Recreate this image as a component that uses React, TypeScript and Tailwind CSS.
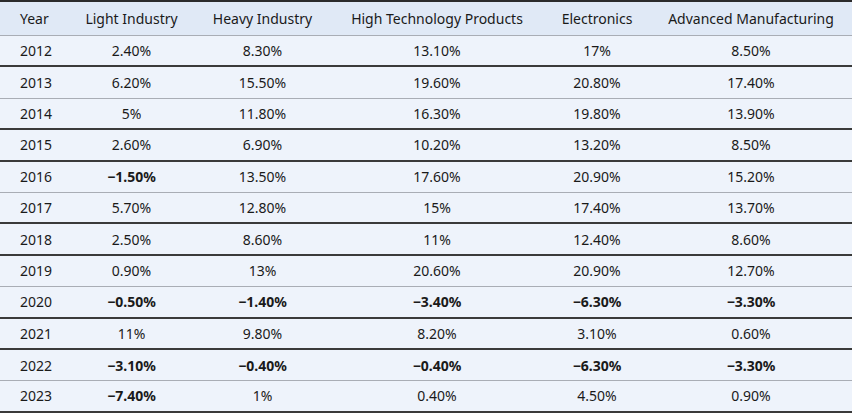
import React from "react";

type Row = { year: string; vals: string[]; dark: boolean };

const rows: Row[] = [
  { year: "2012", vals: ["2.40%", "8.30%", "13.10%", "17%", "8.50%"], dark: true },
  { year: "2013", vals: ["6.20%", "15.50%", "19.60%", "20.80%", "17.40%"], dark: false },
  { year: "2014", vals: ["5%", "11.80%", "16.30%", "19.80%", "13.90%"], dark: true },
  { year: "2015", vals: ["2.60%", "6.90%", "10.20%", "13.20%", "8.50%"], dark: true },
  { year: "2016", vals: ["\u22121.50%", "13.50%", "17.60%", "20.90%", "15.20%"], dark: false },
  { year: "2017", vals: ["5.70%", "12.80%", "15%", "17.40%", "13.70%"], dark: true },
  { year: "2018", vals: ["2.50%", "8.60%", "11%", "12.40%", "8.60%"], dark: true },
  { year: "2019", vals: ["0.90%", "13%", "20.60%", "20.90%", "12.70%"], dark: false },
  { year: "2020", vals: ["\u22120.50%", "\u22121.40%", "\u22123.40%", "\u22126.30%", "\u22123.30%"], dark: true },
  { year: "2021", vals: ["11%", "9.80%", "8.20%", "3.10%", "0.60%"], dark: true },
  { year: "2022", vals: ["\u22123.10%", "\u22120.40%", "\u22120.40%", "\u22126.30%", "\u22123.30%"], dark: false },
  { year: "2023", vals: ["\u22127.40%", "1%", "0.40%", "4.50%", "0.90%"], dark: true },
];

const headers = ["Light Industry", "Heavy Industry", "High Technology Products", "Electronics", "Advanced Manufacturing"];

const grid = "grid grid-cols-[68px_127px_135px_214px_106px_202px]";

export default function App() {
  return (
    <div className="w-[855px] h-[415px] bg-white text-[#1a1a1a] text-[14px]" style={{ fontFamily: '"Noto Sans", "Open Sans", sans-serif' }}>
      <div className="w-[852px] bg-[#eef3fb] border-t-2 border-[#2b2b2b]">
        <div className={`${grid} h-[34px] items-center bg-[#e0e9f6] border-b border-[#a9adb5]`}>
          <div className="pl-[20px]">Year</div>
          {headers.map((h) => (
            <div key={h} className="text-center whitespace-nowrap">{h}</div>
          ))}
        </div>
        {rows.map((r) => (
          <div
            key={r.year}
            className={`${grid} h-[31.4px] items-center ${r.dark ? "border-b-2 border-[#3a3a3a]" : "border-b border-[#a9adb5]"}`}
          >
            <div className="pl-[20px]">{r.year}</div>
            {r.vals.map((v, i) => (
              <div key={i} className={`text-center ${v.startsWith("\u2212") ? "font-bold" : ""}`}>{v}</div>
            ))}
          </div>
        ))}
      </div>
    </div>
  );
}
